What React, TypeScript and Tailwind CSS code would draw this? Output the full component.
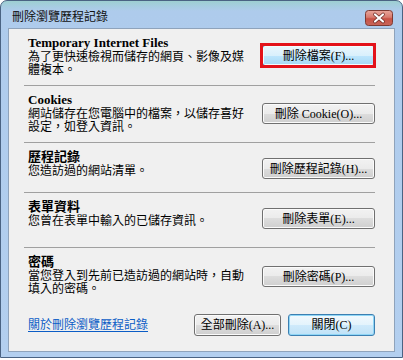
import React from "react";

const FONT = "font-['Liberation_Serif','Noto_Sans_CJK_TC',serif]";

type Variant = "gray" | "blue" | "default";

function Btn({ label, w, variant = "gray" }: { label: string; w: string; variant?: Variant }) {
  const base =
    "flex items-center justify-center rounded-[3px] border text-[12px] leading-[12px] text-black whitespace-nowrap";
  const v =
    variant === "gray"
      ? "border-[#707070] bg-[linear-gradient(to_bottom,#f2f2f2_0%,#ebebeb_50%,#dddddd_50%,#cfcfcf_100%)] shadow-[inset_0_0_0_1px_#fbfbfb]"
      : variant === "blue"
      ? "border-[#3c7fb1] bg-[linear-gradient(to_bottom,#eaf6fd_0%,#d9f0fc_50%,#bee6fd_50%,#a7d9f5_100%)] shadow-[inset_0_0_0_1px_#f4fbfe]"
      : "border-[#3c7fb1] bg-[linear-gradient(to_bottom,#f2f9fd_0%,#e3f3fc_50%,#cfeafb_50%,#bfe2f7_100%)] shadow-[inset_0_0_0_1px_#8fd6f6]";
  return (
    <div className={`${base} ${v} ${w}`}>
      <span>{label}</span>
    </div>
  );
}

function Section({
  title,
  lines,
  btn,
  h,
  btnTop,
  border = true,
  highlight = false,
}: {
  title: string;
  lines: string[];
  btn: string;
  h: string;
  btnTop: string;
  border?: boolean;
  highlight?: boolean;
}) {
  return (
    <div className={`flex items-start justify-between ${h} ${border ? "border-b border-[#a0a0a0]" : ""}`}>
      <div className="pl-[4px] pt-[7px]">
        <div className="h-[14px] text-[13px] leading-[14px] font-bold text-black">{title}</div>
        <div className="mt-[1px] text-[12px] leading-[13px] text-black">
          {lines.map((l, i) => (
            <div key={i} className="h-[13px] whitespace-nowrap">
              {l}
            </div>
          ))}
        </div>
      </div>
      <div className={`relative ${btnTop}`}>
        <Btn label={btn} w="w-[113px] h-[21px]" variant={highlight ? "blue" : "gray"} />
        {highlight && (
          <div className="absolute left-[-2px] right-[-1px] top-[-2px] bottom-[-2px] border-[3px] border-[#e3121a]" />
        )}
      </div>
    </div>
  );
}

export default function App() {
  return (
    <div className={`w-[403px] h-[360px] bg-white ${FONT}`}>
      <div className="w-[403px] h-[358px] rounded-t-[7px] border border-[#4a6383] bg-[linear-gradient(to_bottom,#9dcfd1_0px,#a6cde0_5px,#aecbec_10px,#b3cfef_100%)] flex flex-col">
        {/* title bar */}
        <div className="h-[27px] flex items-start justify-between">
          <div className="pl-[11px] pt-[9px] text-[12px] leading-[12px] text-[#111] font-['Noto_Sans_CJK_TC',sans-serif]">
            刪除瀏覽歷程記錄
          </div>
          <div className="mt-[9px] mr-[9px]">
            <svg width="28" height="16" viewBox="0 0 28 16">
              <defs>
                <linearGradient id="cb" x1="0" y1="0" x2="0" y2="1">
                  <stop offset="0" stopColor="#e9a79c" />
                  <stop offset="0.45" stopColor="#d77b6f" />
                  <stop offset="0.55" stopColor="#c85245" />
                  <stop offset="1" stopColor="#c8665a" />
                </linearGradient>
              </defs>
              <rect x="0.5" y="0.5" width="27" height="15" rx="3" fill="url(#cb)" stroke="#7d3a33" />
              <path d="M10 4.5 L18 11.5 M18 4.5 L10 11.5" stroke="#6a2a24" strokeWidth="3.6" strokeLinecap="round" />
              <path d="M10 4.5 L18 11.5 M18 4.5 L10 11.5" stroke="#ffffff" strokeWidth="2.2" strokeLinecap="round" />
            </svg>
          </div>
        </div>
        {/* content */}
        <div className="mx-[7px] h-[324px] border border-[#8fa3bb] bg-[#f0f0f0]">
          <div className="ml-[15px] w-[351px]">
            <Section
              title="Temporary Internet Files"
              lines={["為了更快速檢視而儲存的網頁、影像及媒", "體複本。"]}
              btn="刪除檔案(F)..."
              h="h-[57px]"
              btnTop="mt-[16px]"
              highlight
            />
            <Section
              title="Cookies"
              lines={["網站儲存在您電腦中的檔案，以儲存喜好", "設定，如登入資訊。"]}
              btn="刪除 Cookie(O)..."
              h="h-[57px]"
              btnTop="mt-[17px]"
            />
            <Section
              title="歷程記錄"
              lines={["您造訪過的網站清單。"]}
              btn="刪除歷程記錄(H)..."
              h="h-[50px]"
              btnTop="mt-[15px]"
            />
            <Section
              title="表單資料"
              lines={["您曾在表單中輸入的已儲存資訊。"]}
              btn="刪除表單(E)..."
              h="h-[55px]"
              btnTop="mt-[15px]"
            />
            <Section
              title="密碼"
              lines={["當您登入到先前已造訪過的網站時，自動", "填入的密碼。"]}
              btn="刪除密碼(P)..."
              h="h-[66px]"
              btnTop="mt-[18px]"
              border={false}
            />
            <div className="flex items-center justify-between h-[22px]">
              <div className="pl-[4px] text-[12px] leading-[12px] text-[#0b5dc6] underline underline-offset-[2px]">
                關於刪除瀏覽歷程記錄
              </div>
              <div className="flex gap-[7px]">
                <Btn label="全部刪除(A)..." w="w-[87px] h-[22px]" />
                <Btn label="關閉(C)" w="w-[87px] h-[22px]" variant="default" />
              </div>
            </div>
          </div>
        </div>
      </div>
    </div>
  );
}
